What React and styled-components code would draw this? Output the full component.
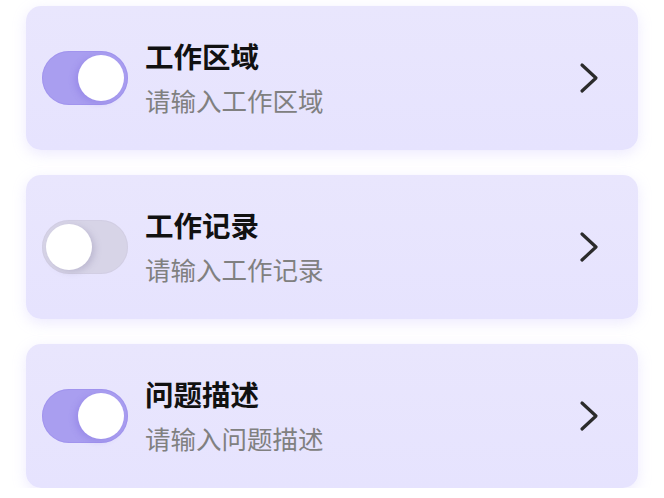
import React, { useState } from 'react';
import styled, { createGlobalStyle } from 'styled-components';

const GlobalStyle = createGlobalStyle`
  body {
    margin: 0;
    background: #ffffff;
    font-family: "Noto Sans CJK SC", "Noto Sans", sans-serif;
  }
`;

const List = styled.div`
  display: flex;
  flex-direction: column;
  gap: 25px;
  padding: 6px 26px 0 26px;
`;

const Card = styled.div`
  height: 144px;
  box-sizing: border-box;
  display: flex;
  align-items: center;
  padding: 0 37px 0 16px;
  border-radius: 15px;
  background: linear-gradient(180deg, #e9e6fd 0%, #e6e3fe 100%);
  box-shadow: 0 4px 14px rgba(190, 180, 250, 0.28);
`;

const Toggle = styled.button`
  flex: none;
  width: 86px;
  height: 54px;
  border: none;
  padding: 4px;
  border-radius: 27px;
  display: flex;
  justify-content: ${p => (p.$on ? 'flex-end' : 'flex-start')};
  align-items: center;
  cursor: pointer;
  background: ${p => (p.$on ? '#a99ef0' : '#d7d4e7')};
  box-shadow: inset 0 0 0 1px ${p => (p.$on ? 'rgba(150,135,235,0.45)' : 'rgba(200,196,220,0.35)')};
`;

const Knob = styled.span`
  width: 46px;
  height: 46px;
  border-radius: 50%;
  background: #ffffff;
  box-shadow: ${p => (p.$on ? '-3px 2px 6px rgba(120,100,220,0.3)' : '3px 2px 6px rgba(140,135,170,0.35)')};
`;

const Texts = styled.div`
  flex: 1;
  display: flex;
  flex-direction: column;
  gap: 14px;
  margin-left: 17px;
`;

const Title = styled.div`
  font-size: 28.5px;
  font-weight: 700;
  line-height: 30px;
  color: #111111;
`;

const Hint = styled.div`
  font-size: 25.5px;
  line-height: 30px;
  color: #808080;
`;

const Chevron = () => (
  <svg width="22" height="32" viewBox="0 0 22 32" fill="none">
    <path d="M3 3 L17 16 L3 29" stroke="#2b2b2b" strokeWidth="3.2" strokeLinecap="round" strokeLinejoin="round" />
  </svg>
);

const items = [
  { title: '工作区域', hint: '请输入工作区域', on: true },
  { title: '工作记录', hint: '请输入工作记录', on: false },
  { title: '问题描述', hint: '请输入问题描述', on: true },
];

function Row({ item }) {
  const [on, setOn] = useState(item.on);
  return (
    <Card>
      <Toggle $on={on} onClick={() => setOn(!on)}>
        <Knob $on={on} />
      </Toggle>
      <Texts>
        <Title>{item.title}</Title>
        <Hint>{item.hint}</Hint>
      </Texts>
      <Chevron />
    </Card>
  );
}

export default function App() {
  return (
    <>
      <GlobalStyle />
      <List>
        {items.map(item => (
          <Row key={item.title} item={item} />
        ))}
      </List>
    </>
  );
}
